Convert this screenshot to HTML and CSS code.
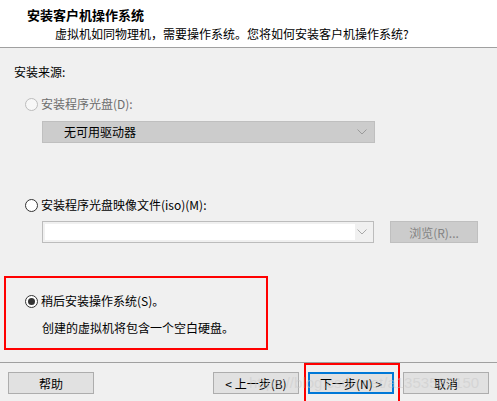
FILE: index.html
```html
<!DOCTYPE html>
<html lang="zh-CN">
<head>
<meta charset="utf-8">
<link rel="stylesheet" href="styles.css">
</head>
<body>
<div class="win">
  <div class="header">
    <div class="title">安装客户机操作系统</div>
    <div class="subtitle">虚拟机如同物理机，需要操作系统。您将如何安装客户机操作系统?</div>
  </div>
  <div class="main">
    <div class="label">安装来源:</div>
    <div class="radio-row r1 disabled"><span class="radio"></span><span>安装程序光盘(D):</span></div>
    <div class="select disabled-select">
      <span class="sel-text">无可用驱动器</span>
      <svg class="chev" width="10" height="6" viewBox="0 0 10 6"><path d="M0.5 0.5 L5 5 L9.5 0.5" fill="none" stroke="#9a9a9a" stroke-width="1"/></svg>
    </div>
    <div class="radio-row r2"><span class="radio"></span><span>安装程序光盘映像文件(iso)(M):</span></div>
    <div class="combo-row">
      <div class="combo">
        <div class="combo-field"></div>
        <svg class="chev2" width="10" height="6" viewBox="0 0 10 6"><path d="M0.5 0.5 L5 5 L9.5 0.5" fill="none" stroke="#a8a8a8" stroke-width="1"/></svg>
      </div>
      <div class="browse">浏览(R)...</div>
    </div>
    <div class="later-box">
      <div class="radio-row r3"><span class="radio checked"></span><span>稍后安装操作系统(S)。</span></div>
      <div class="note">创建的虚拟机将包含一个空白硬盘。</div>
    </div>
  </div>
  <div class="footer">
    <div class="btn help">帮助</div>
    <div class="btn prev">&lt; 上一步(B)</div>
    <div class="btn next">下一步(N) &gt;</div>
    <div class="btn cancel">取消</div>
    <div class="next-mark"></div>
    <div class="watermark">https://blog.csdn.net/a1353580150</div>
  </div>
</div>
</body>
</html>
```
FILE: styles.css
```css
* { box-sizing: border-box; }
html, body { margin: 0; padding: 0; }
body {
  background: #f0f0f0;
  font-family: "Noto Sans CJK SC", "Noto Sans", sans-serif;
  font-size: 12px;
  color: #000;
}
.win { width: 497px; height: 401px; position: relative; overflow: hidden; background: #f0f0f0; }
.header {
  height: 48px;
  background: #fff;
  border-bottom: 1px solid #a0a0a0;
  padding-top: 6px;
}
.title { padding-left: 27px; font-weight: bold; font-size: 13px; line-height: 18px; height: 18px; }
.subtitle { padding-left: 55px; line-height: 18px; margin-top: 1px; }
.main { padding-left: 14px; padding-top: 16px; }
.label { line-height: 16px; height: 16px; }
.radio-row { display: flex; align-items: center; height: 16px; line-height: 16px; margin-left: 11px; }
.radio {
  width: 13px; height: 13px; border-radius: 50%;
  border: 1px solid #333; background: #fff;
  margin-right: 3px; position: relative; flex: none;
}
.radio.checked::after {
  content: ""; position: absolute; left: 2px; top: 2px; width: 7px; height: 7px;
  border-radius: 50%; background: #333;
}
.disabled { color: #6d6d6d; }
.disabled .radio { border-color: #bcbcbc; background: #f7f7f7; }
.r1 { margin-top: 16px; }
.select {
  margin-left: 28px; margin-top: 9px;
  width: 333px; height: 22px;
  display: flex; align-items: center; justify-content: space-between;
  background: #cccccc; border: 1px solid #bfbfbf;
  padding: 0 7px 0 21px;
}
.sel-text { line-height: 20px; }
.r2 { margin-top: 54px; }
.combo-row { display: flex; align-items: center; margin-top: 7px; margin-left: 28px; height: 24px; }
.combo {
  width: 332px; height: 22px; border: 1px solid #bcbcbc; background: #f0f0f0;
  display: flex; align-items: center; padding: 2px 6px 2px 2px; justify-content: space-between;
}
.combo-field { width: 310px; height: 16px; background: #fff; }
.browse {
  margin-left: 16px; width: 88px; height: 22px;
  background: #cccccc; border: 1px solid #bfbfbf; color: #838383;
  display: flex; align-items: center; justify-content: center;
}
.later-box {
  margin-left: -10px; margin-top: 32px;
  width: 264px; height: 74px; border: 2px solid #ff0000;
  padding-top: 15px;
}
.r3 { margin-left: 19px; }
.note { margin-left: 36px; margin-top: 11px; line-height: 16px; }
.footer {
  position: relative;
  margin-top: 12px;
  border-top: 1px solid #a0a0a0;
  padding-top: 9px;
  display: flex;
  height: 40px;
}
.btn {
  height: 22px; width: 86px;
  background: #e1e1e1; border: 1px solid #adadad;
  display: flex; align-items: center; justify-content: center;
}
.help { margin-left: 8px; }
.prev { margin-left: 119px; width: 86px; }
.next { margin-left: 9px; border: 2px solid #0078d7; width: 86px; }
.cancel { margin-left: 9px; width: 86px; }
.next-mark {
  position: absolute; left: 304px; top: 0px; width: 96px; height: 42px;
  border: 2px solid #ff0000;
}
.watermark {
  position: absolute; left: 249px; top: 9px;
  font-family: "Liberation Sans", Arial, sans-serif; font-size: 15px; line-height: 22px;
  color: rgba(200, 200, 200, 0.5);
  white-space: nowrap; pointer-events: none;
}
```
